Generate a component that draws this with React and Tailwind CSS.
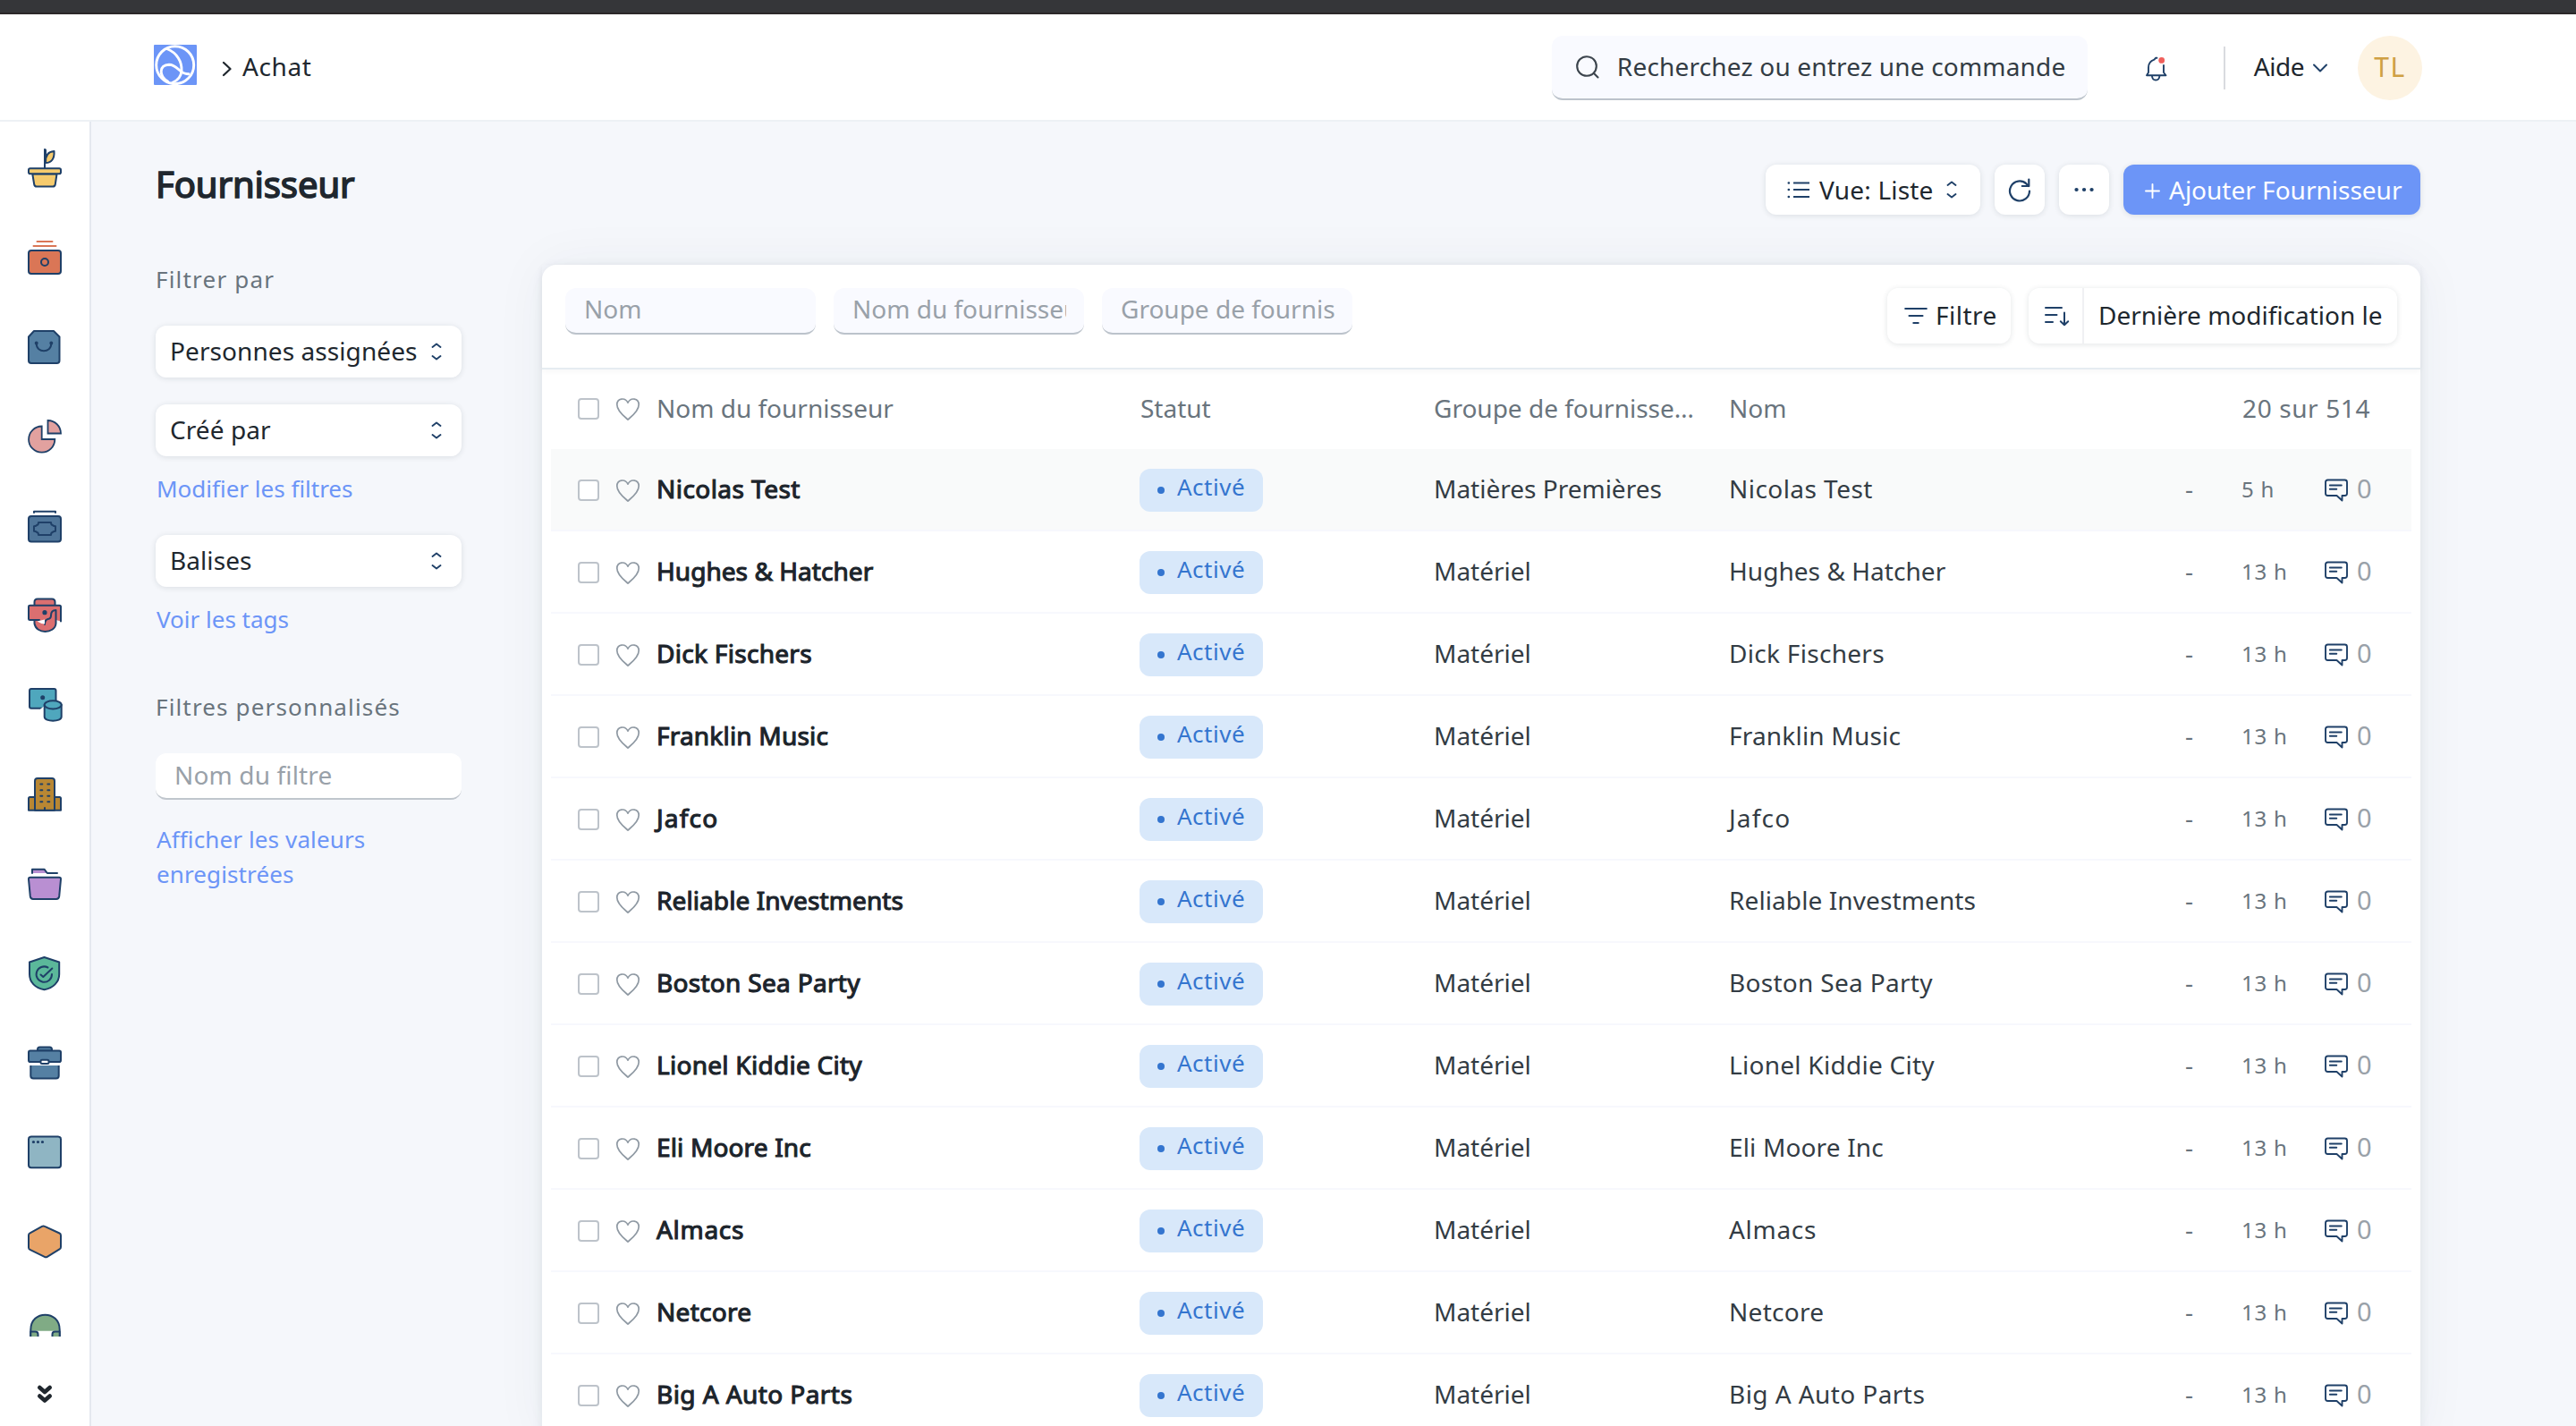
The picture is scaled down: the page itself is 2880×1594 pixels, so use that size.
import React from "react";

const NAVY = "#1f4068";

const rows = [
  { name: "Nicolas Test", group: "Matières Premières", time: "5 h", hover: true, spacing: "tracking-[0.450px]" },
  { name: "Hughes & Hatcher", group: "Matériel", time: "13 h", spacing: "tracking-[0.050px]" },
  { name: "Dick Fischers", group: "Matériel", time: "13 h", spacing: "tracking-[0.300px]" },
  { name: "Franklin Music", group: "Matériel", time: "13 h", spacing: "tracking-[0.200px]" },
  { name: "Jafco", group: "Matériel", time: "13 h", spacing: "tracking-[1.200px]" },
  { name: "Reliable Investments", group: "Matériel", time: "13 h", spacing: "tracking-[0.100px]" },
  { name: "Boston Sea Party", group: "Matériel", time: "13 h", spacing: "tracking-[0.300px]" },
  { name: "Lionel Kiddie City", group: "Matériel", time: "13 h", spacing: "tracking-[0.270px]" },
  { name: "Eli Moore Inc", group: "Matériel", time: "13 h", spacing: "tracking-[0.150px]" },
  { name: "Almacs", group: "Matériel", time: "13 h", spacing: "tracking-[0.700px]" },
  { name: "Netcore", group: "Matériel", time: "13 h", spacing: "tracking-[0.300px]" },
  { name: "Big A Auto Parts", group: "Matériel", time: "13 h", spacing: "tracking-[0.430px]" },
];

function Stroke({ w, h, color = NAVY, sw = 2, className = "", children }) {
  return (
    <svg width={w} height={h} viewBox={`0 0 ${w} ${h}`} fill="none" stroke={color} strokeWidth={sw} strokeLinecap="round" strokeLinejoin="round" className={"shrink-0 " + className}>
      {children}
    </svg>
  );
}

const UpDown = ({ className = "" }) => (
  <Stroke w={12} h={20} sw={1.9} className={className}>
    <path d="M1.500 5 6 1.500l4.500 3.500M1.500 15 6 18.500l4.500-3.500" />
  </Stroke>
);

const Logo = () => (
  <svg width="48" height="45" viewBox="0 0 48 45" fill="none" stroke="#fff" strokeWidth="2.9" strokeLinecap="round">
    <rect width="48" height="45" rx="1" fill="#6c95f7" stroke="none" />
    <circle cx="23.700" cy="22.700" r="21" />
    <path d="M14.500 4.500C26 9 31.500 19 31 29C30.500 35.500 27 40 20.500 42.500" />
    <path d="M15.500 41C5.500 35 5.500 22.500 17 22.200C27 22.200 28.500 33.500 39 32.700" />
  </svg>
);

const Chevron = () => (
  <Stroke w={12} h={18} color="#20272e" sw={2.200}>
    <path d="M2 2l7.500 7L2 16" />
  </Stroke>
);

const Search = () => (
  <Stroke w={28} h={28} color="#3c444d" sw={2.100}>
    <circle cx="13" cy="13" r="10.800" />
    <path d="M21 21l4.500 4.500" />
  </Stroke>
);

const Bell = () => (
  <Stroke w={29} h={31} sw={1.900}>
    <path d="M15.500 3.800h-1.500l-1.500 1.800C8 7 6 10.500 6 14.500v5.500l-2 3.300h21.500l-2.500-3.300v-8" />
    <path d="M10 24c.4 6 8 6 8.400 0" />
    <circle cx="20.700" cy="6.400" r="3.400" fill="#f0605c" stroke="none" />
  </Stroke>
);

const ListIcon = () => (
  <Stroke w={26} h={20} sw={2.100}>
    <path d="M7 2.500h18M7 10h18M7 18h18" strokeLinecap="butt" />
    <path d="M1.800 2.500h.1M1.800 10h.1M1.800 18h.1" strokeWidth="2.600" />
  </Stroke>
);

const Refresh = () => (
  <Stroke w={28} h={28} sw={2.200}>
    <path d="M25 15.500A11 11 0 1 1 21.500 7.400L24 10" />
    <path d="M24.300 2.500V10h-7.500" />
  </Stroke>
);

const FilterIcon = () => (
  <Stroke w={26} h={20} sw={2.100}>
    <path d="M1.200 2h23.600M5.500 10h15M10.300 18h5.400" />
  </Stroke>
);

const SortIcon = () => (
  <Stroke w={30} h={24} sw={2}>
    <path d="M2 3h18M2 11h12.500M2 19h8M23 8.500v13.500M18.800 18.200 23 22.200l4.200-4" />
  </Stroke>
);

const Heart = () => (
  <Stroke w={28} h={26} color="#8f99a3" sw={1.700}>
    <path d="M14 25C10 21.500 1.800 15.800 1.800 8.300C1.800 1 11 -.2 14 6.200C17 -.2 26.200 1 26.200 8.300C26.200 15.800 18 21.500 14 25Z" />
  </Stroke>
);

const Comment = () => (
  <Stroke w={28} h={26} sw={1.900}>
    <path d="M4.500 1.500h19Q26 1.500 26 4v12.500Q26 19 23.500 19H20.500v5.500L14.500 19h-10Q2 19 2 16.500V4Q2 1.500 4.500 1.500Z" />
    <path d="M6.800 7.500h13M6.800 11.700h7.500" />
  </Stroke>
);

const Checkbox = () => <span className="size-6 shrink-0 rounded-[4px] border-2 border-[#bdc3ca] bg-white" />;

const sideIcons = [
  <g fill="#f6cb6d">
    <path d="M31 24V9.500" />
    <path d="M31 24c-.5-8 2.500-12.500 9.500-13C41 19 38 24 31 24Z" />
    <path d="M30 9v21" />
    <path d="M16.300 36.500l1.900 11.500q.4 2.500 2.800 2.500h18q2.400 0 2.800-2.500l1.700-11.500Z" />
    <rect x="12" y="30.200" width="36" height="6" rx="1.800" />
  </g>,
  <g fill="#da7656">
    <path d="M21.500 12h17M17.500 17h25" stroke="#da7656" />
    <rect x="12" y="22" width="36" height="26" rx="3" />
    <circle cx="30" cy="35" r="4" />
  </g>,
  <g fill="#5580a3">
    <path d="M18 12h22l6.500 6.500V45q0 3-3 3H15q-3 0-3-3V18.500Z" />
    <path d="M20.700 26c0 11 16.600 11 16.600 0" />
    <circle cx="20.700" cy="25.500" r="1" /><circle cx="37.300" cy="25.500" r="1" />
  </g>,
  <g fill="#e2a19f" strokeWidth="1.800" strokeLinejoin="miter">
    <path d="M26.700 18.500V33h14.600A14.600 14.600 0 1 1 26.700 18.500Z" />
    <path d="M33.500 26.500V12A14.500 14.500 0 0 1 48 26.500Z" />
  </g>,
  <g fill="#4f7599">
    <path d="M18 15v-1.300h24V15" fill="none" />
    <rect x="12" y="19" width="36" height="28.500" rx="3" />
    <path d="M23 26h14q0 3 2 3 0 1 3 1.200v5.600q-3 .2-3 1.200-2 0-2 3H23q0-3-2-3 0-1-3-1.200v-5.600q3-.2 3-1.200 2 0 2-3Z" />
  </g>,
  <g fill="#dc6f70">
    <path d="M18.500 35v4C19.500 45 25 48 30.500 48S42 45 42.500 39V19h-24Z" stroke="none" />
    <path d="M18.500 19v-4q0-3.500 3.500-3.500h16q3.500 0 3.500 3.500v4Z" />
    <path d="M24 35H13.500q-1.500 0-1.500-1.500V20q0-1.300 1.500-1.300h33q1.500 0 1.500 1.500V36.500L42.500 35V24" stroke="none" />
    <path d="M24 35H13.500q-1.500 0-1.500-1.500V20q0-1.300 1.500-1.300h33q1.500 0 1.500 1.500V36.500" fill="none" />
    <path d="M18.500 36v3C19.500 45 25 48 30.500 48S42 45 42.500 39V24C39 24 37 26.500 37 30q0 3.500-3.500 4Q30 35 30 40" fill="none" />
    <path d="M21.500 36.500l8.500-2v5q-5-.5-8.500-3Z" fill="#fff" stroke="none" />
    <circle cx="30" cy="26.700" r="1.600" fill={NAVY} />
  </g>,
  <g fill="#4fa7bd">
    <rect x="13" y="12" width="29.500" height="21.800" rx="2" />
    <path d="M24.500 35.200l3.800-3.200h2v4h-5.800Z" fill="#fff" stroke="none" />
    <circle cx="27.700" cy="21.700" r="1.500" fill={NAVY} />
    <path d="M29.700 29.800v13.500c0 5.800 19 5.800 19 0V29.800" />
    <ellipse cx="39.200" cy="29.800" rx="9.500" ry="4.600" />
  </g>,
  <g fill="#b98733">
    <path d="M12 47.800V34.500q0-1.500 1.500-1.500h33q1.500 0 1.500 1.500v13.300Z" />
    <path d="M19 47.800V15q0-3 3-3h16q3 0 3 3v32.800Z" />
    <path d="M25.300 18.500h2M33.300 18.500h2M25.300 25.200h2M33.300 25.200h2M25.300 31.800h2M33.300 31.800h2M25.300 38.300h2M33.300 38.300h2M30 45v2.500" />
  </g>,
  <g fill="#b98fd2">
    <path d="M16 18v-4.300h13.500l3.300 4.300" stroke="none" />
    <path d="M16 18v-4.300h13.500l3.300 4.300H44" fill="none" />
    <path d="M14 22.700h32q2.200 0 2 2.200l-1.800 19q-.4 3-3.200 3H17q-2.800 0-3.200-3L12 24.900q-.2-2.200 2-2.200Z" />
  </g>,
  <g fill="#5bb89a">
    <path d="M29.500 12l16.700 5.500V31c0 9-7 15.500-16.700 17.300C19.500 46.500 13 40 13 31V17.500Z" />
    <path d="M33.500 23.500A8.700 8.700 0 1 0 38 31" />
    <path d="M25.500 31.500l2.800 2.500 10-9.500" />
  </g>,
  <g fill="#5580a3">
    <path d="M22 16.500V15q0-2.500 2.500-2.500h11q2.500 0 2.500 2.500v1.500Z" />
    <path d="M14.300 33v11.500q0 3 3 3h25.400q3 0 3-3V33" strokeLinecap="butt" />
    <rect x="12" y="16.500" width="36" height="12.500" rx="1.800" />
    <rect x="25.500" y="26.800" width="9" height="4.200" rx="1.500" fill="#fff" />
  </g>,
  <g fill="#8fb5c3">
    <rect x="12" y="12.500" width="36" height="34.800" rx="3" />
    <path d="M17.400 18.500h.1M22.400 18.500h.1M27.400 18.500h.1" strokeWidth="3.200" />
  </g>,
  <g fill="#e9a468">
    <path d="M27 12.800q1.500-.8 3 0l16.500 7.700q1.500.7 1.500 2.400v13q0 1.600-1.500 2.400l-13.700 8.500q-1.500.9-3 0L13.500 38.900Q12 38.200 12 36.500V22.700q0-1.700 1.500-2.400Z" />
  </g>,
  <g fill="#80ab85">
    <path d="M14 29.700C14 5.500 46.500 5.500 46.500 29.700Z" stroke="none" />
    <path d="M14.300 40V28.500C14.300 6 46.700 6 46.700 28.500V40" fill="none" />
    <path d="M14.300 30.500h5.200q3 0 3 3V40h-8.200ZM46.700 30.500h-5.200q-3 0-3 3V40h8.200Z" />
  </g>,
];

function SideBar() {
  return (
    <nav className="flex w-[102px] shrink-0 flex-col border-r-2 border-[#e4e8ef] bg-white pt-0.5">
      <div className="flex h-[1356px] flex-col overflow-hidden">
        {sideIcons.map((icon, i) => (
          <div key={i} className="flex h-[100px] shrink-0 items-center justify-center">
            <svg width="60" height="60" viewBox="0 0 60 60" fill="none" stroke={NAVY} strokeWidth="2" strokeLinecap="round" strokeLinejoin="round">
              {icon}
            </svg>
          </div>
        ))}
      </div>
      <div className="flex flex-1 items-center justify-center pt-[27px]">
        <Stroke w={20} h={24} color="#20272e" sw={4.600}>
          <path d="M4.300 5 10 10l5.700-5M4.300 14.500l5.700 5 5.700-5" />
        </Stroke>
      </div>
    </nav>
  );
}

function Header() {
  return (
    <header className="flex h-[120px] shrink-0 items-center border-b-2 border-[#edf1f5] bg-white pl-[172px] pr-[172px] pt-0.5">
      <div className="pb-[7px]"><Logo /></div>
      <div className="ml-[28px] flex pt-0.5"><Chevron /></div>
      <span className="ml-[11px] pb-[5px] tracking-[0.6px]">Achat</span>
      <div className="ml-auto flex h-[72px] w-[599px] items-center rounded-xl border-b-2 border-[#bcc3cb] bg-[#f9faff] pl-[26px] text-[#333c44]">
        <Search />
        <span className="ml-[19px] whitespace-nowrap pb-[3px] tracking-[0.18px]">Recherchez ou entrez une commande</span>
      </div>
      <div className="ml-[62px]"><Bell /></div>
      <div className="ml-[61px] h-12 w-0.5 bg-[#d9dbdf]" />
      <span className="ml-8 pb-[4px] tracking-[-0.5px]">Aide</span>
      <Stroke w={18} h={12} className="ml-[9px]"><path d="M2 2.500l7 7 7-7" /></Stroke>
      <div className="ml-[33px] flex size-[72px] items-center justify-center rounded-full bg-[#fdf3e2] pb-[2px] text-[30px] tracking-[1.500px] text-[#cfa044]">TL</div>
    </header>
  );
}

const btn = "flex items-center bg-white shadow-[0_1px_6px_rgba(25,39,52,0.12)]";

function Select({ label, className }) {
  return (
    <div className={"flex h-[58px] items-center rounded-xl bg-white pl-4 pr-[22px] shadow-[0_1px_6px_rgba(25,39,52,0.12)] " + className}>
      <span className="pb-[3px] tracking-[0.080px]">{label}</span>
      <UpDown className="ml-auto" />
    </div>
  );
}

function Filters() {
  return (
    <aside className="w-[342px] shrink-0 text-[26px] leading-[40px]">
      <div className="-mt-1 tracking-[1.200px] text-[#69747d]">Filtrer par</div>
      <Select label="Personnes assignées" className="mt-8 text-[28px]" />
      <Select label="Créé par" className="mt-[30px] text-[28px]" />
      <div className="mt-4 pl-px text-[#6c95f7]">Modifier les filtres</div>
      <Select label="Balises" className="mt-8 text-[28px]" />
      <div className="mt-4 pl-px text-[#6c95f7]">Voir les tags</div>
      <div className="mt-[58px] tracking-[1.150px] text-[#69747d]">Filtres personnalisés</div>
      <div className="mt-8 flex h-[52px] items-center rounded-xl border-b-2 border-[#c0c6cd] bg-white pb-[3px] pl-[21px] text-[28px] tracking-[0.150px] text-[#99a1a9]">Nom du filtre</div>
      <div className="mt-[25px] w-[260px] pl-px leading-[38.500px] tracking-[0.120px] text-[#6c95f7]">Afficher les valeurs enregistrées</div>
    </aside>
  );
}

function FieldInput({ label }) {
  return (
    <div className="h-[52px] w-[280px] rounded-xl border-b-2 border-[#bcc3cb] bg-[#f9faff] pl-[21px] pr-5">
      <div className="h-[50px] overflow-hidden whitespace-nowrap leading-[47px] text-[#99a1a9]">{label}</div>
    </div>
  );
}

function Card() {
  return (
    <section className="ml-[90px] w-[2100px] shrink-0 rounded-t-2xl bg-white shadow-[0_2px_12px_rgba(40,55,80,0.09),0_0_60px_rgba(40,55,80,0.05)]">
      <div className="flex h-[117px] items-start border-b-2 border-[#e6ecf1] px-[26px] pt-[26px] shadow-[0_2px_6px_rgba(25,39,52,0.04)]">
        <div className="flex gap-5">
          <FieldInput label="Nom" />
          <FieldInput label="Nom du fournisseur" />
          <FieldInput label="Groupe de fournis" />
        </div>
        <div className={btn + " ml-auto h-[62px] w-[138px] rounded-xl pl-[19px]"}>
          <FilterIcon />
          <span className="ml-[9px] pb-[3px] tracking-[0.5px]">Filtre</span>
        </div>
        <div className={btn + " ml-5 h-[62px] w-[412px] rounded-xl"}>
          <div className="flex h-full w-[62px] items-center border-r-2 border-[#f0f1f3] pl-[17px]"><SortIcon /></div>
          <span className="ml-[16px] whitespace-nowrap pb-[3px]">Dernière modification le</span>
        </div>
      </div>
      <div className="flex h-[89px] items-center pb-[3px] pl-[40px] pr-[56px] text-[#69747d]">
        <div className="flex w-[629px] items-center">
          <div className="flex pt-0.5"><Checkbox /></div>
          <div className="ml-[18px] pt-0.5"><Heart /></div>
          <span className="ml-[18px] pb-px">Nom du fournisseur</span>
        </div>
        <span className="w-[328px]">Statut</span>
        <div className="w-[330px]"><div className="w-[300px] truncate">Groupe de fournisseurs</div></div>
        <span>Nom</span>
        <span className="ml-auto tracking-[0.6px]">20 sur 514</span>
      </div>
      <div className="px-[10px]">
        {rows.map((r) => (
          <div key={r.name} className={"flex h-[92px] items-center border-b-2 border-[#f7f8fd] pl-[30px] pr-[40px] " + (r.hover ? "bg-[#f9fafa]" : "")}>
            <div className="flex w-[628px] items-center pt-0.5">
              <Checkbox />
              <div className="ml-[18px]"><Heart /></div>
              <span className={"ml-[18px] pb-[5px] text-[#1c242b] [-webkit-text-stroke:1.100px_currentColor] " + r.spacing}>{r.name}</span>
            </div>
            <div className="w-[329px] pt-0.5">
              <div className="flex h-12 w-[138px] items-center rounded-xl bg-[#d8e8fa] pl-5 text-[26px] text-[#3475cf]">
                <span className="size-2 rounded-full bg-[#3475cf]" />
                <span className="ml-[14px] pb-[8px] tracking-[0.5px]">Activé</span>
              </div>
            </div>
            <span className="w-[330px] pb-0.5 text-[#333c44]">{r.group}</span>
            <span className={"w-[510px] pb-0.5 text-[#333c44] " + r.spacing}>{r.name}</span>
            <span className="w-[63px] pb-[3px] text-[#69747d]">-</span>
            <span className="w-[92px] text-[24px] tracking-[0.8px] text-[#69747d]">{r.time}</span>
            <div className="pt-0.5"><Comment /></div>
            <span className="ml-[9px] pb-[3px] text-[29px] text-[#99a1a9]">0</span>
          </div>
        ))}
      </div>
    </section>
  );
}

export default function App() {
  return (
    <div className="flex h-[1594px] w-[2880px] flex-col overflow-hidden bg-[#f5f7fb] font-['Noto_Sans',sans-serif] text-[28px] leading-[40px] text-[#20272e]">
      <div className="h-4 shrink-0 border-b-2 border-[#2b2829] bg-[#353639]" />
      <Header />
      <div className="flex min-h-0 flex-1">
        <SideBar />
        <main className="flex-1 pl-[72px]">
          <div className="flex h-[160px] items-start pr-[174px] pt-12">
            <h1 className="mt-0.5 text-[40px] tracking-[-0.080px] [-webkit-text-stroke:1.600px_currentColor]">Fournisseur</h1>
            <div className={btn + " ml-auto h-14 w-[240px] rounded-xl pl-6"}>
              <ListIcon />
              <span className="ml-[10px] whitespace-nowrap pb-px tracking-[0.2px]">Vue: Liste</span>
              <UpDown className="ml-[14px]" />
            </div>
            <div className={btn + " ml-4 size-14 justify-center rounded-xl"}><Refresh /></div>
            <div className={btn + " ml-4 size-14 justify-center rounded-xl"}>
              <Stroke w={24} h={6} sw={4.200}><path d="M3.500 3h.1M12 3h.1M20.500 3h.1" /></Stroke>
            </div>
            <div className="ml-4 flex h-14 w-[332px] items-center rounded-xl bg-[#6c95f7] pl-6 text-white shadow-[0_1px_6px_rgba(25,39,52,0.12)]">
              <Stroke w={17} h={17} color="#fff" sw={1.900} className="mt-[3px]"><path d="M8.500 1v15M1 8.500h15" /></Stroke>
              <span className="ml-[10px] whitespace-nowrap pb-px">Ajouter Fournisseur</span>
            </div>
          </div>
          <div className="flex">
            <Filters />
            <Card />
          </div>
        </main>
      </div>
    </div>
  );
}
